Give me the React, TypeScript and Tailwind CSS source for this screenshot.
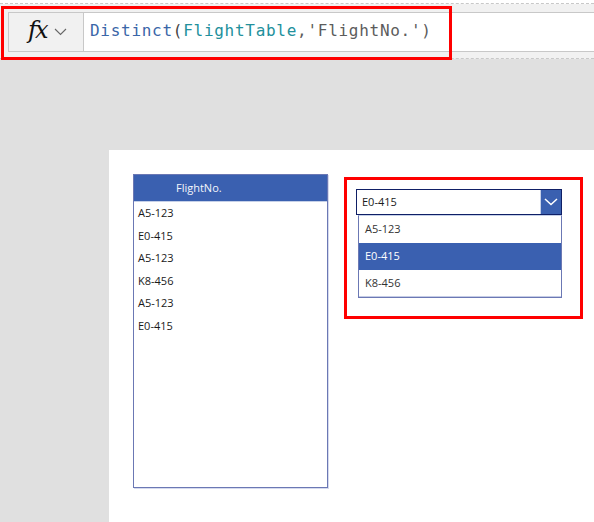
import React from "react";

const font = { fontFamily: '"Open Sans", "Noto Sans", sans-serif' };
const rows = ["A5-123", "E0-415", "A5-123", "K8-456", "A5-123", "E0-415"];

export default function App() {
  return (
    <div className="relative w-[594px] h-[522px] overflow-hidden bg-[#e0e0e0] flex flex-col" style={font}>
      <div className="h-[59px] shrink-0 flex flex-col bg-white">
        <div className="h-[4px] shrink-0 bg-white border-b border-dashed border-[#c8c8c8]" />
        <div className="flex-1 flex flex-col bg-[#f1f1f1] border-b border-dashed border-[#c8c8c8] pt-[8px] pb-[5px] pl-[8px]">
          <div className="flex h-[40px] border-y border-[#c8c8c8] bg-white">
            <div className="w-[76px] shrink-0 bg-[#f1f1f1] border-x border-[#c8c8c8] flex items-center pl-[19px]">
              <span className="w-[26px] text-[24px] leading-none italic text-[#111] font-['DejaVu_Serif'] tracking-[-2px] mt-[-5px]">fx</span>
              <svg width="13" height="8" viewBox="0 0 13 8" fill="none" stroke="#666" strokeWidth="1.1"><path d="M1 1l5.5 5.5L12 1" /></svg>
            </div>
            <div className="flex-1 flex items-center pl-[6px] pb-[2px] text-[16px] tracking-[0.72px] whitespace-pre font-['DejaVu_Sans_Mono'] text-[#555]">
              <span className="text-[#3a66a8]">Distinct</span>
              <span className="text-[#444]">(</span>
              <span className="text-[#22909c]">FlightTable</span>
              <span className="text-[#5c5c5c]">,'FlightNo.')</span>
            </div>
          </div>
        </div>
      </div>

      <div className="flex-1 pt-[91px] pl-[109px]">
        <div className="h-full bg-white pt-[24px] pl-[24px] flex items-start text-[11px] text-[#1a1a1a]">
          <div className="w-[195px] h-[314px] shrink-0 border border-[#6b78b4] shadow-[1px_1px_0_#d5daee] flex flex-col">
            <div className="h-[27px] shrink-0 bg-[#3a60b0] border-b border-[#c5d0e8] text-[#f4f6fb] flex items-center pl-[42px]">FlightNo.</div>
            <div className="flex flex-col">
              {rows.map((r, i) => (
                <div key={i} className="h-[22.5px] flex items-center pl-[4px]">{r}</div>
              ))}
            </div>
          </div>

          <div className="ml-[28px] mt-[15px] w-[206px] shrink-0 flex flex-col items-end">
            <div className="w-[206px] h-[26px] border border-[#0f1f66] flex items-center">
              <span className="flex-1 pl-[5px]">E0-415</span>
              <div className="w-[21px] h-full bg-[#3a60b0] border-l border-[#c5d0e8] flex items-center justify-center">
                <svg width="14" height="8" viewBox="0 0 14 8" fill="none" stroke="#fff" strokeWidth="1.5"><path d="M1 1l6 5.5L13 1" /></svg>
              </div>
            </div>
            <div className="w-[204px] border border-[#6b78b4] border-t-[#c5d0e8] shadow-[inset_0_-1px_0_#c5cce5] flex flex-col">
              <div className="h-[27px] flex items-center pl-[6px] text-[#333]">A5-123</div>
              <div className="h-[27px] flex items-center pl-[6px] bg-[#3a60b0] text-white">E0-415</div>
              <div className="h-[27px] flex items-center pl-[6px] text-[#333]">K8-456</div>
            </div>
          </div>
        </div>
      </div>

      <div className="absolute left-[1px] top-[6px] w-[451px] h-[54px] border-[3px] border-[#ff0000]" />
      <div className="absolute left-[344px] top-[177px] w-[239px] h-[142px] border-[3px] border-[#ff0000]" />
    </div>
  );
}
